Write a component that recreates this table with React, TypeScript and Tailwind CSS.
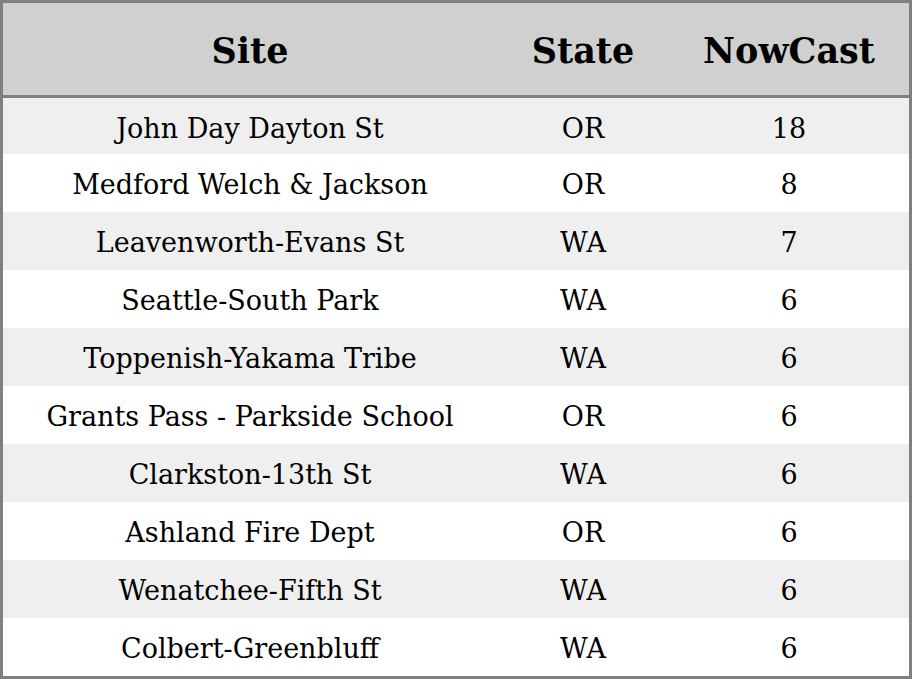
import React from "react";

const rows: [string, string, string][] = [
  ["John Day Dayton St", "OR", "18"],
  ["Medford Welch & Jackson", "OR", "8"],
  ["Leavenworth-Evans St", "WA", "7"],
  ["Seattle-South Park", "WA", "6"],
  ["Toppenish-Yakama Tribe", "WA", "6"],
  ["Grants Pass - Parkside School", "OR", "6"],
  ["Clarkston-13th St", "WA", "6"],
  ["Ashland Fire Dept", "OR", "6"],
  ["Wenatchee-Fifth St", "WA", "6"],
  ["Colbert-Greenbluff", "WA", "6"],
];

export default function App() {
  return (
    <div
      className="w-[912px] h-[679px] border-[3px] border-[#808080] bg-white text-black flex flex-col"
      style={{ fontFamily: '"DejaVu Serif", serif' }}
    >
      <div className="grid grid-cols-[494px_172px_1fr] h-[95px] shrink-0 bg-[#d0d0d0] border-b-[3px] border-[#808080] items-center text-[35px] font-bold pt-[4px]">
        <div className="text-center">Site</div>
        <div className="text-center">State</div>
        <div className="text-center">NowCast</div>
      </div>
      <div className="flex-1 grid grid-rows-[56px_repeat(9,58px)]">
        {rows.map((r, i) => (
          <div
            key={i}
            className={`grid grid-cols-[494px_172px_1fr] items-center text-[27px] ${i === 0 ? "pt-[6px]" : "pt-[5px]"} ${i % 2 === 0 ? "bg-[#efefef]" : "bg-white"}`}
          >
            <div className="text-center">{r[0]}</div>
            <div className="text-center">{r[1]}</div>
            <div className="text-center">{r[2]}</div>
          </div>
        ))}
      </div>
    </div>
  );
}
